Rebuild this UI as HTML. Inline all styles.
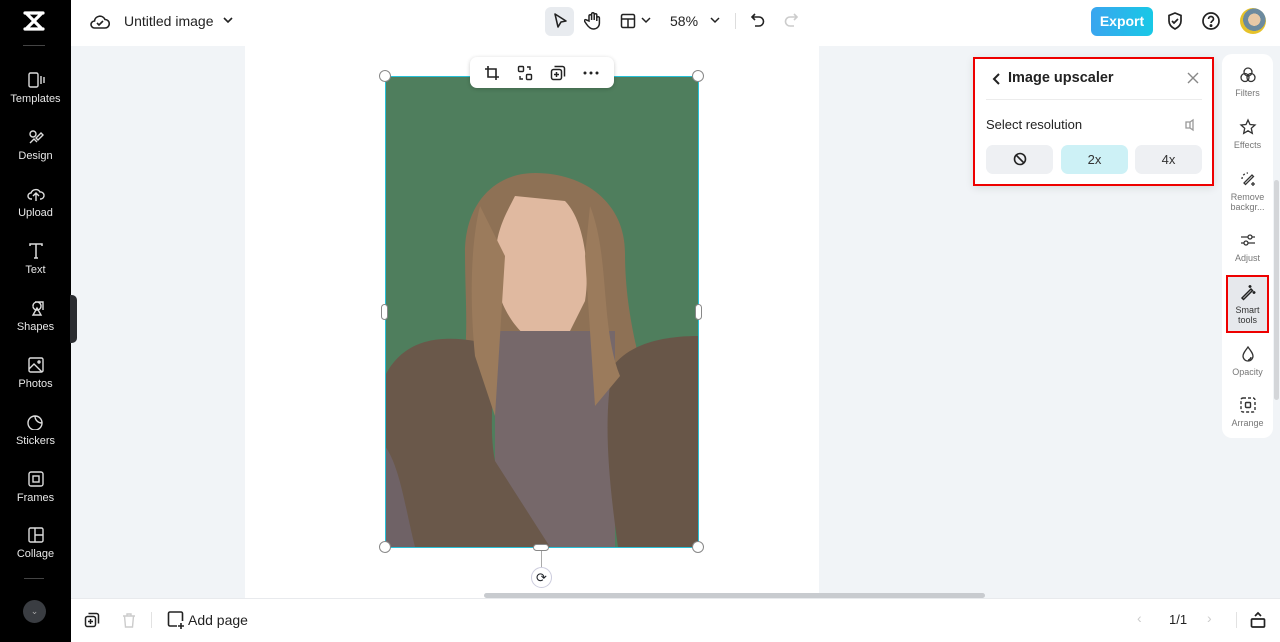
<!DOCTYPE html>
<html><head><meta charset="utf-8"><style>
*{box-sizing:border-box;margin:0;padding:0}
body{width:1280px;height:642px;overflow:hidden;font-family:"Liberation Sans",sans-serif;background:#f1f4f7;position:relative;color:#1f2329}
.abs{position:absolute}
#side{left:0;top:0;width:71px;height:642px;background:#000}
.si{position:absolute;left:0;width:71px;text-align:center;color:#e8e8e8;font-size:11px}
.si svg{display:block;margin:0 auto 5px}
#top{left:71px;top:0;width:1209px;height:46px;background:#fff}
#bot{left:71px;top:598px;width:1209px;height:44px;background:#fff;border-top:1px solid #e8eaed}
#page{left:245px;top:46px;width:574px;height:552px;background:#fff}
.h{position:absolute;width:12px;height:12px;border-radius:50%;background:#fff;border:1px solid #888}
#rp{left:1222px;top:54px;width:51px;height:384px;background:#fff;border-radius:10px}
.ri{position:absolute;left:0;width:51px;text-align:center;font-size:9px;color:#777;line-height:10px}
.ri svg{display:block;margin:0 auto 4px}
#pop{left:973px;top:57px;width:241px;height:129px;background:#fff;border:2px solid #e00;box-shadow:0 2px 8px rgba(0,0,0,.1)}
.btn{position:absolute;top:86px;width:67px;height:29px;border-radius:7px;background:#eef0f3;text-align:center;line-height:29px;font-size:13px;color:#333}
</style></head><body>
<div id="side" class="abs">
 <svg class="abs" style="left:22px;top:10px" width="24" height="22" viewBox="0 0 24 22"><path d="M3 3h18M3 19h18M5 4l14 14M19 4L5 18" stroke="#fff" stroke-width="3.2" fill="none" stroke-linecap="round"/></svg>
 <div class="abs" style="left:23px;top:45px;width:22px;height:1px;background:#444"></div>
 <div class="si" style="top:72px"><svg width="18" height="16" viewBox="0 0 18 16" fill="none" stroke="#ddd" stroke-width="1.4"><rect x="2" y="1" width="9" height="14" rx="1.5"/><path d="M14 4v8M17 5v6"/></svg>Templates</div>
 <div class="si" style="top:129px"><svg width="18" height="16" viewBox="0 0 18 16" fill="none" stroke="#ddd" stroke-width="1.4"><circle cx="6" cy="5" r="3"/><path d="M9 9l5-5 2 2-5 5zM3 14l4-4 3 3"/></svg>Design</div>
 <div class="si" style="top:186px"><svg width="18" height="16" viewBox="0 0 18 16" fill="none" stroke="#ddd" stroke-width="1.4"><path d="M5 13H4a3 3 0 010-6 5 5 0 019-1 3.5 3.5 0 011 7h-1M9 15V8M6 10l3-3 3 3"/></svg>Upload</div>
 <div class="si" style="top:243px"><svg width="18" height="16" viewBox="0 0 18 16" fill="none" stroke="#ddd" stroke-width="1.5"><path d="M3 3V1h12v2M9 1v14M7 15h4"/></svg>Text</div>
 <div class="si" style="top:300px"><svg width="18" height="16" viewBox="0 0 18 16" fill="none" stroke="#ddd" stroke-width="1.4"><path d="M6 6a4 4 0 110 .1M8 2h8v8M10 8l-4 7h8z"/></svg>Shapes</div>
 <div class="si" style="top:357px"><svg width="18" height="16" viewBox="0 0 18 16" fill="none" stroke="#ddd" stroke-width="1.4"><rect x="2" y="1" width="14" height="14" rx="1.5"/><path d="M2 12l5-5 8 8"/><circle cx="12" cy="5" r="1"/></svg>Photos</div>
 <div class="si" style="top:414px"><svg width="18" height="16" viewBox="0 0 18 16" fill="none" stroke="#ddd" stroke-width="1.4"><path d="M15 9A7 7 0 118 2c0 4 3 7 7 7zM8 2c4 0 7 3 7 7"/></svg>Stickers</div>
 <div class="si" style="top:471px"><svg width="18" height="16" viewBox="0 0 18 16" fill="none" stroke="#ddd" stroke-width="1.4"><rect x="2" y="1" width="14" height="14" rx="2"/><rect x="6" y="5" width="6" height="6"/></svg>Frames</div>
 <div class="si" style="top:527px"><svg width="18" height="16" viewBox="0 0 18 16" fill="none" stroke="#ddd" stroke-width="1.4"><rect x="2" y="1" width="14" height="14" rx="1.5"/><path d="M8 1v14M8 8h8"/></svg>Collage</div>
 <div class="abs" style="left:24px;top:578px;width:20px;height:1px;background:#444"></div>
 <div class="abs" style="left:23px;top:600px;width:23px;height:23px;border-radius:50%;background:#3a3d42;color:#aaa;font-size:9px;text-align:center;line-height:23px">⌄</div>
 <div class="abs" style="left:70px;top:295px;width:7px;height:48px;background:#2a2c30;border-radius:0 5px 5px 0"></div>
</div>
<div id="top" class="abs">
 <svg class="abs" style="left:19px;top:13px" width="20" height="18" viewBox="0 0 20 18" fill="none" stroke="#222" stroke-width="1.6"><path d="M5 15H4.5a3.5 3.5 0 010-7 5.5 5.5 0 0110.5-1.5A4 4 0 0115 15z"/><path d="M7 10l2 2 4-4"/></svg>
 <div class="abs" style="left:53px;top:13px;font-size:14px;color:#222">Untitled image</div>
 <svg class="abs" style="left:152px;top:16px" width="10" height="8" viewBox="0 0 10 8"><path d="M1 2l4 4 4-4" stroke="#222" stroke-width="1.6" fill="none"/></svg>
 <div class="abs" style="left:474px;top:7px;width:29px;height:29px;border-radius:6px;background:#e8ebef"></div>
 <svg class="abs" style="left:481px;top:12px" width="16" height="18" viewBox="0 0 16 18"><path d="M3 2l11 7-5 1-3 5z" stroke="#222" stroke-width="1.6" fill="none" stroke-linejoin="round"/></svg>
 <svg class="abs" style="left:513px;top:11px" width="18" height="20" viewBox="0 0 18 20" fill="none" stroke="#222" stroke-width="1.5"><path d="M5 10V5a1.3 1.3 0 012.6 0v4V3a1.3 1.3 0 012.6 0v6V4a1.3 1.3 0 012.6 0v6V7a1.3 1.3 0 012.6 0v5c0 4-3 6-6 6s-5-2-7-5l-2-3a1.2 1.2 0 012-1z"/></svg>
 <svg class="abs" style="left:549px;top:13px" width="16" height="16" viewBox="0 0 16 16" fill="none" stroke="#222" stroke-width="1.5"><rect x="1.5" y="1.5" width="13" height="13" rx="1.5"/><path d="M1.5 6h13M8 6v8.5"/></svg>
 <svg class="abs" style="left:570px;top:17px" width="10" height="7" viewBox="0 0 10 7"><path d="M1 1l4 4 4-4" stroke="#222" stroke-width="1.5" fill="none"/></svg>
 <div class="abs" style="left:599px;top:13px;font-size:14px;color:#222">58%</div>
 <svg class="abs" style="left:639px;top:17px" width="10" height="7" viewBox="0 0 10 7"><path d="M1 1l4 4 4-4" stroke="#222" stroke-width="1.5" fill="none"/></svg>
 <div class="abs" style="left:664px;top:13px;width:1px;height:16px;background:#ddd"></div>
 <svg class="abs" style="left:679px;top:12px" width="16" height="16" viewBox="0 0 16 16" fill="none" stroke="#222" stroke-width="1.6"><path d="M5 2L2 5l3 3M2 5h7a4.5 4.5 0 010 9H5"/></svg>
 <svg class="abs" style="left:712px;top:12px" width="16" height="16" viewBox="0 0 16 16" fill="none" stroke="#ccc" stroke-width="1.6"><path d="M11 2l3 3-3 3M14 5H7a4.5 4.5 0 000 9h4"/></svg>
 <div class="abs" style="left:1020px;top:7px;width:62px;height:29px;border-radius:6px;background:linear-gradient(90deg,#3aa5ef,#18c8e6);color:#fff;font-weight:bold;font-size:14px;text-align:center;line-height:29px">Export</div>
 <svg class="abs" style="left:1095px;top:11px" width="18" height="20" viewBox="0 0 18 20" fill="none" stroke="#222" stroke-width="1.7"><path d="M9 2l6 2.5V10c0 4-3 6.5-6 8-3-1.5-6-4-6-8V4.5z"/><path d="M6 10l2 2 4-4"/></svg>
 <svg class="abs" style="left:1130px;top:11px" width="20" height="20" viewBox="0 0 20 20" fill="none" stroke="#222" stroke-width="1.7"><circle cx="10" cy="10" r="8"/><path d="M7.5 8a2.5 2.5 0 115 0c0 2-2.5 2-2.5 4"/><circle cx="10" cy="14.6" r=".6" fill="#222"/></svg>
 <div class="abs" style="left:1169px;top:8px;width:26px;height:26px;border-radius:50%;background:radial-gradient(circle at 55% 45%,#e8c9a6 0 30%,#6c8a9e 31% 55%,#e6c22a 56%)"></div>
</div>
<div id="page" class="abs"></div>
<svg class="abs" style="left:385px;top:76px" width="313" height="471" viewBox="0 0 313 471">
 <rect width="313" height="471" fill="#4f7e5d"/>
 <path d="M150 97c-40 0-70 30-70 80 0 50 5 90-5 130l40 20 110 0 35-20c-10-40-20-80-20-130 0-50-40-80-90-80z" fill="#8e7155"/>
 <path d="M130 120c-10 20-20 35-20 70 0 40 25 70 40 75h30l20-40c5-30 0-80-20-100z" fill="#e0b9a0"/>
 <path d="M110 255h120v216H110z" fill="#76686a"/>
 <path d="M0 300c20-40 60-40 90-35 30 20 10 70 20 120l55 86H0z" fill="#6a584a"/>
 <path d="M313 260c-40 0-70 10-85 30-10 50-5 110 5 181h80z" fill="#685648"/>
 <path d="M0 370l-0 101h30c-10-40-15-80-30-101z" fill="#6f6266"/>
 <path d="M95 130c-10 40-10 100-5 150l20 60 10-160zM205 130c20 50 10 120 30 170l-25 30-10-150z" fill="#9b7b5c"/>
</svg>
<div class="abs" style="left:385px;top:76px;width:314px;height:472px;border:1.5px solid #27c1d8"></div>
<div class="h" style="left:379px;top:70px"></div><div class="h" style="left:692px;top:70px"></div>
<div class="h" style="left:379px;top:541px"></div><div class="h" style="left:692px;top:541px"></div>
<div class="abs" style="left:381px;top:304px;width:7px;height:16px;border-radius:4px;background:#fff;border:1px solid #888"></div>
<div class="abs" style="left:695px;top:304px;width:7px;height:16px;border-radius:4px;background:#fff;border:1px solid #888"></div>
<div class="abs" style="left:533px;top:544px;width:16px;height:7px;border-radius:4px;background:#fff;border:1px solid #888"></div>
<div class="abs" style="left:541px;top:551px;width:1px;height:16px;background:#aaa"></div>
<div class="abs" style="left:531px;top:567px;width:21px;height:21px;border-radius:50%;background:#fff;border:1px solid #ccd;text-align:center;line-height:19px;font-size:13px">⟳</div>
<div class="abs" style="left:470px;top:57px;width:144px;height:31px;border-radius:7px;background:#fff;box-shadow:0 1px 4px rgba(0,0,0,.2)">
 <svg class="abs" style="left:14px;top:8px" width="16" height="16" viewBox="0 0 16 16" fill="none" stroke="#222" stroke-width="1.6"><path d="M4 1v11h11M1 4h11v11"/></svg>
 <svg class="abs" style="left:47px;top:8px" width="16" height="16" viewBox="0 0 16 16" fill="none" stroke="#222" stroke-width="1.4"><rect x="1.5" y="1.5" width="5" height="5" rx="1"/><rect x="9.5" y="9.5" width="5" height="5" rx="1"/><path d="M10 2h3v3M6 14H3v-3"/></svg>
 <svg class="abs" style="left:80px;top:8px" width="16" height="16" viewBox="0 0 16 16" fill="none" stroke="#222" stroke-width="1.5"><rect x="1.5" y="4.5" width="10" height="10" rx="2"/><path d="M4.5 1.5h8a2 2 0 012 2v8M6.5 7v5M4 9.5h5"/></svg>
 <svg class="abs" style="left:113px;top:14px" width="16" height="4" viewBox="0 0 16 4"><circle cx="2" cy="2" r="1.5" fill="#222"/><circle cx="8" cy="2" r="1.5" fill="#222"/><circle cx="14" cy="2" r="1.5" fill="#222"/></svg>
</div>
<div class="abs" style="left:484px;top:593px;width:501px;height:5px;border-radius:3px;background:#c8cbcf"></div>
<div id="bot" class="abs">
 <svg class="abs" style="left:13px;top:13px" width="16" height="16" viewBox="0 0 16 16" fill="none" stroke="#222" stroke-width="1.5"><rect x="1.5" y="4.5" width="10" height="10" rx="2"/><path d="M4.5 1.5h8a2 2 0 012 2v8M6.5 7v5M4 9.5h5"/></svg>
 <svg class="abs" style="left:50px;top:13px" width="16" height="16" viewBox="0 0 16 16" fill="none" stroke="#ccc" stroke-width="1.4"><path d="M2 4h12M6 4V2h4v2M3.5 4l1 11h7l1-11"/></svg>
 <div class="abs" style="left:80px;top:13px;width:1px;height:16px;background:#e2e2e2"></div>
 <svg class="abs" style="left:96px;top:12px" width="18" height="18" viewBox="0 0 18 18" fill="none" stroke="#222" stroke-width="1.6"><path d="M10 15H3a1.5 1.5 0 01-1.5-1.5v-11A1.5 1.5 0 013 1h11a1.5 1.5 0 011.5 1.5V10M14 12v6M11 15h6"/></svg>
 <div class="abs" style="left:117px;top:13px;font-size:14px;color:#222">Add page</div>
 <div class="abs" style="left:1066px;top:11px;font-size:14px;color:#ccc">‹</div>
 <div class="abs" style="left:1098px;top:13px;font-size:13px;color:#222">1/1</div>
 <div class="abs" style="left:1136px;top:11px;font-size:14px;color:#ccc">›</div>
 <div class="abs" style="left:1165px;top:13px;width:1px;height:16px;background:#e2e2e2"></div>
 <svg class="abs" style="left:1179px;top:12px" width="16" height="18" viewBox="0 0 16 18" fill="none" stroke="#222" stroke-width="1.7"><rect x="1.5" y="8" width="13" height="8" rx="1"/><path d="M5 5l3-3 3 3"/></svg>
</div>
<div class="abs" style="left:1274px;top:180px;width:5px;height:220px;border-radius:3px;background:#d4d6d9"></div>
<div id="rp" class="abs">
 <div class="ri" style="top:12px"><svg width="18" height="18" viewBox="0 0 18 18" fill="none" stroke="#333" stroke-width="1.3"><circle cx="9" cy="6" r="4"/><circle cx="6" cy="11.5" r="4"/><circle cx="12" cy="11.5" r="4"/></svg>Filters</div>
 <div class="ri" style="top:64px"><svg width="18" height="18" viewBox="0 0 18 18" fill="none" stroke="#333" stroke-width="1.3"><path d="M9 2l2 4.5 5 .5-3.7 3.3 1 5L9 12.8 4.7 15.3l1-5L2 7l5-.5z"/></svg>Effects</div>
 <div class="ri" style="top:116px"><svg width="18" height="18" viewBox="0 0 18 18" fill="none" stroke="#333" stroke-width="1.3"><path d="M5 13l8-8 1.5 1.5-8 8z"/><path d="M3 9a6 6 0 016-6" stroke-dasharray="2 2"/><path d="M14 12v4M12 14h4"/></svg>Remove<br>backgr...</div>
 <div class="ri" style="top:177px"><svg width="18" height="18" viewBox="0 0 18 18" fill="none" stroke="#333" stroke-width="1.3"><path d="M2 6h14M2 12h14"/><circle cx="11" cy="6" r="2" fill="#fff"/><circle cx="7" cy="12" r="2" fill="#fff"/></svg>Adjust</div>
 <div class="abs" style="left:4px;top:221px;width:43px;height:58px;background:#e6e8ec;border:2px solid #e00"></div>
 <div class="ri" style="top:229px;color:#333"><svg width="18" height="18" viewBox="0 0 18 18" fill="none" stroke="#222" stroke-width="1.5"><path d="M3 15l9-9 1.5 1.5-9 9z M11 2v3M9.5 3.5h3M15 8v3M13.5 9.5h3"/></svg>Smart<br>tools</div>
 <div class="ri" style="top:291px"><svg width="18" height="18" viewBox="0 0 18 18" fill="none" stroke="#333" stroke-width="1.3"><path d="M9 2c3 4 5 6.5 5 9a5 5 0 01-10 0c0-2.5 2-5 5-9z"/><path d="M9 15a3 3 0 003-3" fill="#333"/></svg>Opacity</div>
 <div class="ri" style="top:342px"><svg width="18" height="18" viewBox="0 0 18 18" fill="none" stroke="#333" stroke-width="1.4"><rect x="2" y="2" width="14" height="14" rx="2" stroke-dasharray="3 2"/><rect x="6.5" y="6.5" width="5" height="5" rx="1"/></svg>Arrange</div>
</div>
<div id="pop" class="abs">
 <svg class="abs" style="left:17px;top:13px" width="10" height="14" viewBox="0 0 10 14"><path d="M7 2L2 7l5 5" stroke="#222" stroke-width="2" fill="none"/></svg>
 <div class="abs" style="left:33px;top:11px;font-size:14.5px;font-weight:bold;color:#222">Image upscaler</div>
 <svg class="abs" style="left:212px;top:13px" width="12" height="12" viewBox="0 0 12 12"><path d="M1 1l10 10M11 1L1 11" stroke="#888" stroke-width="1.4"/></svg>
 <div class="abs" style="left:11px;top:40px;width:216px;height:1px;background:#ececec"></div>
 <div class="abs" style="left:11px;top:58px;font-size:13px;color:#222">Select resolution</div>
 <svg class="abs" style="left:208px;top:59px" width="14" height="14" viewBox="0 0 14 14" fill="none" stroke="#999" stroke-width="1.3"><path d="M3 4h4v6H3zM7 4l3-2v10l-3-2"/></svg>
 <div class="btn" style="left:11px"><svg style="margin-top:7px" width="14" height="14" viewBox="0 0 14 14" fill="none" stroke="#222" stroke-width="1.6"><circle cx="7" cy="7" r="5.5"/><path d="M3 3l8 8"/></svg></div>
 <div class="btn" style="left:86px;background:#cdf1f6">2x</div>
 <div class="btn" style="left:160px">4x</div>
</div>
</body></html>
